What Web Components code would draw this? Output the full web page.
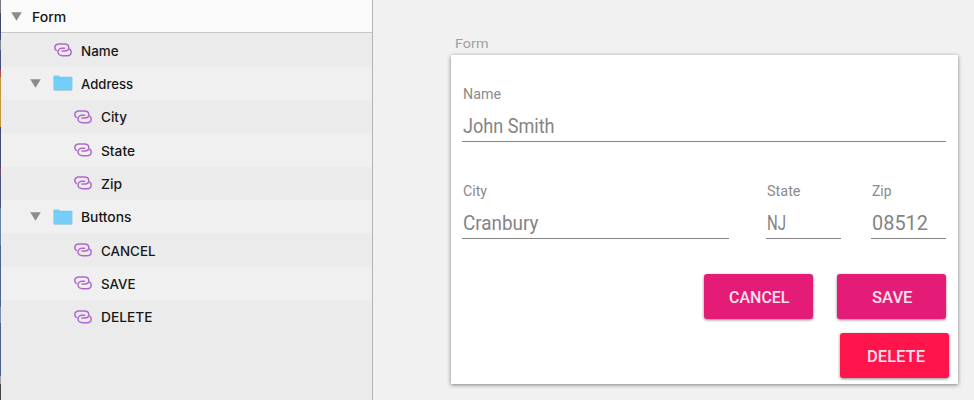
<!DOCTYPE html>
<html lang="en"><head><meta charset="utf-8"><title>Form layers</title>
<style>
html,body{margin:0;height:400px;overflow:hidden}
</style></head><body>
<design-app></design-app>
<script>
const define=(name,html,setup)=>customElements.define(name,class extends HTMLElement{
  connectedCallback(){
    if(this.shadowRoot)return;
    this.attachShadow({mode:'open'}).innerHTML=html;
    if(setup)setup(this,this.shadowRoot);
  }
});
// Text run condensed or expanded to an exact advance width.
define('fit-text',`<style>:host{display:block;white-space:nowrap}span{display:inline-block;transform-origin:0 50%}</style><span></span>`,(h,r)=>{
  const s=r.querySelector('span');s.textContent=h.getAttribute('text');
  const w=+h.getAttribute('width');h.style.width=w+'px';
  s.style.transform=`scaleX(${w/s.getBoundingClientRect().width})`;
});
define('symbol-icon',`<style>:host{display:block;width:18px;height:14px}svg{display:block}</style>
<svg width="18" height="14" viewBox="0 0 18 14" fill="none" stroke="#b068cc" stroke-width="1.5" stroke-linecap="round"><path d="M2.3 7.4C1.2 6.6.8 5.7.8 4.6.8 2.3 2.6.9 4.8.9h5.4c2.7 0 4.6 1.5 4.6 3.6 0 2.2-1.9 3.5-4 3.5H8"/><path d="M15.7 6.2c1.1.8 1.5 1.7 1.5 2.8 0 2.3-1.8 3.7-4 3.7H8.6C5.9 12.7 4 11.3 4 9.1c0-2.2 1.9-3.8 4-3.8h2.6"/></svg>`);
define('folder-icon',`<style>:host{display:block;width:20px;height:16px}svg{display:block}</style>
<svg width="20" height="16"><path d="M.4 1.5Q.4.4 1.5.4h4.2l1.6 1.4h11.1q1 0 1 1v11.5q0 1-1 1H1.4q-1 0-1-1z" fill="#75cef8"/><path d="M.5 3h18.8" stroke="#6bc5f1" stroke-width=".6"/><path d="M1 15.3h18" stroke="#9ebac8" stroke-width=".7"/></svg>`);
define('disclosure-arrow',`<style>:host{display:block;width:11px;height:9px}svg{display:block}</style><svg width="11" height="9"><path d="M.2.2h10.6L5.5 8.8z" fill="#8b8b8b"/></svg>`);
customElements.define('layer-item',class extends HTMLElement{
  connectedCallback(){
    const k=this.getAttribute('kind'),lvl=+this.getAttribute('level');
    const icon=k==='group'?'<disclosure-arrow></disclosure-arrow><folder-icon></folder-icon>':'<symbol-icon></symbol-icon>';
    const pad=k==='group'?29:lvl===1?53:73, lead=lvl===1?80.4:100.1;
    this.attachShadow({mode:'open'}).innerHTML=`<style>
:host{display:flex;align-items:center;height:33.35px;background:var(--row,#ebebeb);font:500 13px/16px Inter,sans-serif;color:#171717}
.lead{flex:none;display:flex;align-items:center;box-sizing:border-box;width:${lead}px;padding-left:${pad}px}
disclosure-arrow{margin-right:12px}fit-text{padding-top:1px}</style><div class="lead">${icon}</div><fit-text text="${this.getAttribute('label')}" width="${this.getAttribute('width')}"></fit-text>`;
  }
});
define('layer-panel',`<style>
:host{display:grid;grid-template-columns:1px 1fr;width:373px;height:400px;box-sizing:border-box;border-right:1px solid #b5b5b5;background:#ebebeb}
.edge{background:linear-gradient(#77777c 0 13px,#3c4970 13px 40px,#85858d 40px 50px,#46527b 50px 70px,#b84b46 70px 77px,#c3993f 77px 127px,#454a70 127px 168px,#7b4757 168px 173px,#465580 173px 208px,#6683aa 208px 245px,#4d6490 245px 307px,#788eaf 307px 323px,#4d5f8c 323px 376px,#a0a0a3 376px 384px,#464448 384px)}
header{display:flex;align-items:center;box-sizing:border-box;height:33.4px;padding:1px 0 0 9.5px;background:#fafafa;border-bottom:1px solid #c8c8c8;font:500 13px/16px Inter,sans-serif;color:#171717}
header fit-text{margin-left:10.5px;padding-top:1px}
layer-item:nth-of-type(even){--row:#f0f0f0}
</style><div class="edge"></div><div><header><disclosure-arrow></disclosure-arrow><fit-text text="Form" width="34.3"></fit-text></header>
<layer-item label="Name" level="1" width="37.5"></layer-item>
<layer-item kind="group" label="Address" level="1" width="52"></layer-item>
<layer-item label="City" level="2" width="26"></layer-item>
<layer-item label="State" level="2" width="34"></layer-item>
<layer-item label="Zip" level="2" width="21"></layer-item>
<layer-item kind="group" label="Buttons" level="1" width="50.5"></layer-item>
<layer-item label="CANCEL" level="2" width="54.5"></layer-item>
<layer-item label="SAVE" level="2" width="34.5"></layer-item>
<layer-item label="DELETE" level="2" width="51.5"></layer-item></div>`);
customElements.define('text-field',class extends HTMLElement{
  connectedCallback(){
    const g=n=>this.getAttribute(n);
    this.attachShadow({mode:'open'}).innerHTML=`<style>
:host{display:block;box-sizing:border-box;height:57px;border-bottom:1px solid #858585;font-family:Roboto,sans-serif;color:#8a8a8a;padding-left:1px}
.l{font-size:14px;line-height:18px}.v{font-size:20px;line-height:24px;margin-top:11px;color:#848484}
</style><fit-text class="l" text="${g('label')}" width="${g('lw')}"></fit-text><fit-text class="v" text="${g('value')}" width="${g('vw')}"></fit-text>`;
  }
});
customElements.define('raised-button',class extends HTMLElement{
  connectedCallback(){
    this.attachShadow({mode:'open'}).innerHTML=`<style>
:host{display:flex;align-items:center;justify-content:center;box-sizing:border-box;padding-left:2px;width:109px;height:45px;border-radius:3px;background:var(--fill,#e51c77);box-shadow:0 1px 3px rgba(0,0,0,.48);color:#fbe1ec;font:500 17px/22px Roboto,sans-serif}
</style><fit-text text="${this.getAttribute('label')}" width="${this.getAttribute('width')}"></fit-text>`;
  }
});
define('form-card',`<style>
:host{display:block;box-sizing:border-box;width:506.5px;height:329px;background:#fff;box-shadow:0 1px 4px rgba(0,0,0,.48);padding:30px 11.5px 0 11px}
.row{display:flex;margin-top:40px}
.city{width:267px}.state{width:75px;margin-left:37px}.zip{width:75px;margin-left:30px}
.actions{display:flex;justify-content:flex-end;gap:24px;margin-top:35px}
.last{margin:14px -3px 0 0}.last raised-button{--fill:#ff144b}
</style><text-field label="Name" lw="38" value="John Smith" vw="91.5"></text-field>
<div class="row"><text-field class="city" label="City" lw="24" value="Cranbury" vw="75.5"></text-field><text-field class="state" label="State" lw="33.5" value="NJ" vw="19"></text-field><text-field class="zip" label="Zip" lw="19.5" value="08512" vw="56"></text-field></div>
<div class="actions"><raised-button label="CANCEL" width="60.5"></raised-button><raised-button label="SAVE" width="40.5"></raised-button></div>
<div class="actions last"><raised-button label="DELETE" width="58"></raised-button></div>`);
define('design-app',`<style>
:host{display:flex;width:974px;height:400px;background:#f1f1f1}
main{padding:34px 0 0 78px}
.title{font:13.5px/18px Roboto,sans-serif;color:#a0a0a0;margin:0 0 3px 3.5px}
</style><layer-panel></layer-panel><main><fit-text class="title" text="Form" width="33.5"></fit-text><form-card></form-card></main>`);
</script></body></html>
